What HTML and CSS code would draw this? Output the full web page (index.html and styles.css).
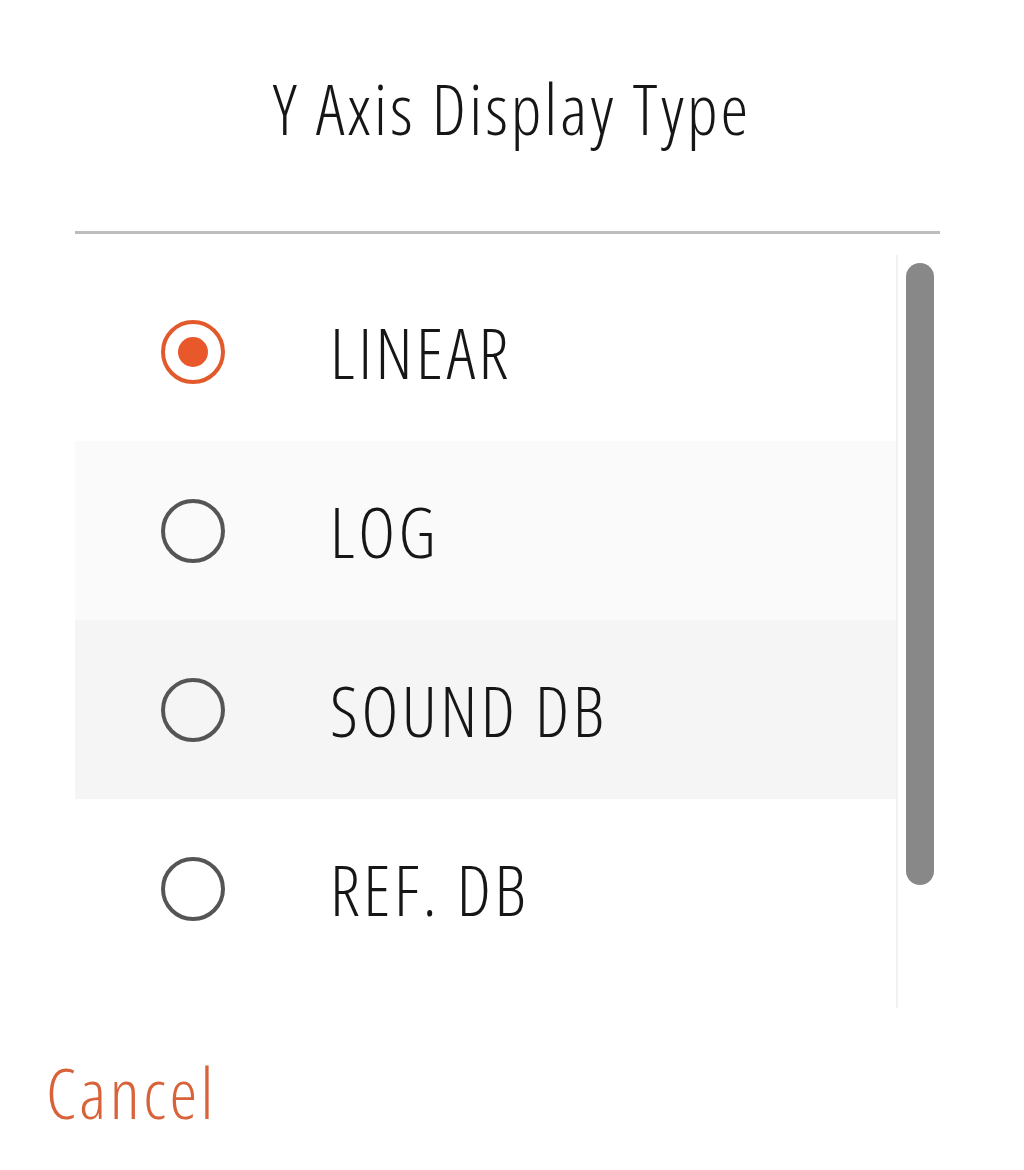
FILE: index.html
```html
<!DOCTYPE html>
<html lang="en">
<head>
<meta charset="UTF-8" />
<meta name="viewport" content="width=device-width, initial-scale=1" />
<title>Y Axis Display Type</title>
<link rel="stylesheet" href="styles.css">
</head>
<body>

<div class="dialog">
  <h1 class="titulek">Y Axis Display Type</h1>
  <div class="oddelovac"></div>

  <div class="seznam-obal">
    <div class="seznam">
      <label class="volba">
        <span class="radio vybrano"></span>
        <span class="popis">LINEAR</span>
      </label>
      <label class="volba svetla">
        <span class="radio"></span>
        <span class="popis">LOG</span>
      </label>
      <label class="volba tmavsi">
        <span class="radio"></span>
        <span class="popis">SOUND DB</span>
      </label>
      <label class="volba">
        <span class="radio"></span>
        <span class="popis">REF. DB</span>
      </label>
    </div>
    <div class="posuvnik">
      <div class="jezdec"></div>
    </div>
  </div>

  <div class="tlacitka">
    <button class="btn-zrusit">Cancel</button>
  </div>
</div>

</body>
</html>
```

FILE: styles.css
```css
body {
  margin: 0;
  background: #fff;
  color: #161616;
  font-family: "Open Sans", "Liberation Sans", sans-serif;
  font-stretch: 75%;
  font-weight: 300;
}
.dialog {
  width: 1024px;
  height: 1170px;
  overflow: hidden;
}
.titulek {
  margin: 60px 0 0 0;
  font-size: 70px;
  font-weight: 300;
  line-height: 96px;
  letter-spacing: 3px;
  text-align: center;
}
.oddelovac {
  height: 3px;
  background: #bdbdbd;
  margin: 75px 84px 0 75px;
}
.seznam-obal {
  display: flex;
  margin: 21px 84px 0 75px;
  height: 753px;
}
.seznam {
  flex: 1;
  padding-top: 7px;
  overflow: hidden;
}
.volba {
  display: flex;
  align-items: center;
  height: 179px;
  cursor: pointer;
}
.volba.svetla {
  background: #fafafa;
}
.volba.tmavsi {
  background: #f5f5f5;
}
.radio {
  box-sizing: border-box;
  width: 64px;
  height: 64px;
  margin-left: 86px;
  border: 4px solid #555;
  border-radius: 50%;
  display: flex;
  align-items: center;
  justify-content: center;
}
.radio.vybrano {
  border-color: #e2592b;
}
.radio.vybrano::after {
  content: "";
  width: 30px;
  height: 30px;
  border-radius: 50%;
  background: #e8582a;
}
.popis {
  margin-left: 105px;
  font-size: 70px;
  line-height: 96px;
  letter-spacing: 3.5px;
}
.posuvnik {
  width: 44px;
  border-left: 2px solid #f1f1f1;
  padding: 8px 0 0 8px;
  box-sizing: border-box;
}
.jezdec {
  width: 28px;
  height: 622px;
  border-radius: 14px;
  background: #888;
}
.tlacitka {
  padding: 36px 0 0 38px;
}
.btn-zrusit {
  background: none;
  border: none;
  padding: 0 8px;
  font-family: inherit;
  font-stretch: 75%;
  font-weight: 300;
  font-size: 70px;
  line-height: 96px;
  letter-spacing: 3.5px;
  color: #d8633a;
  cursor: pointer;
}
```
